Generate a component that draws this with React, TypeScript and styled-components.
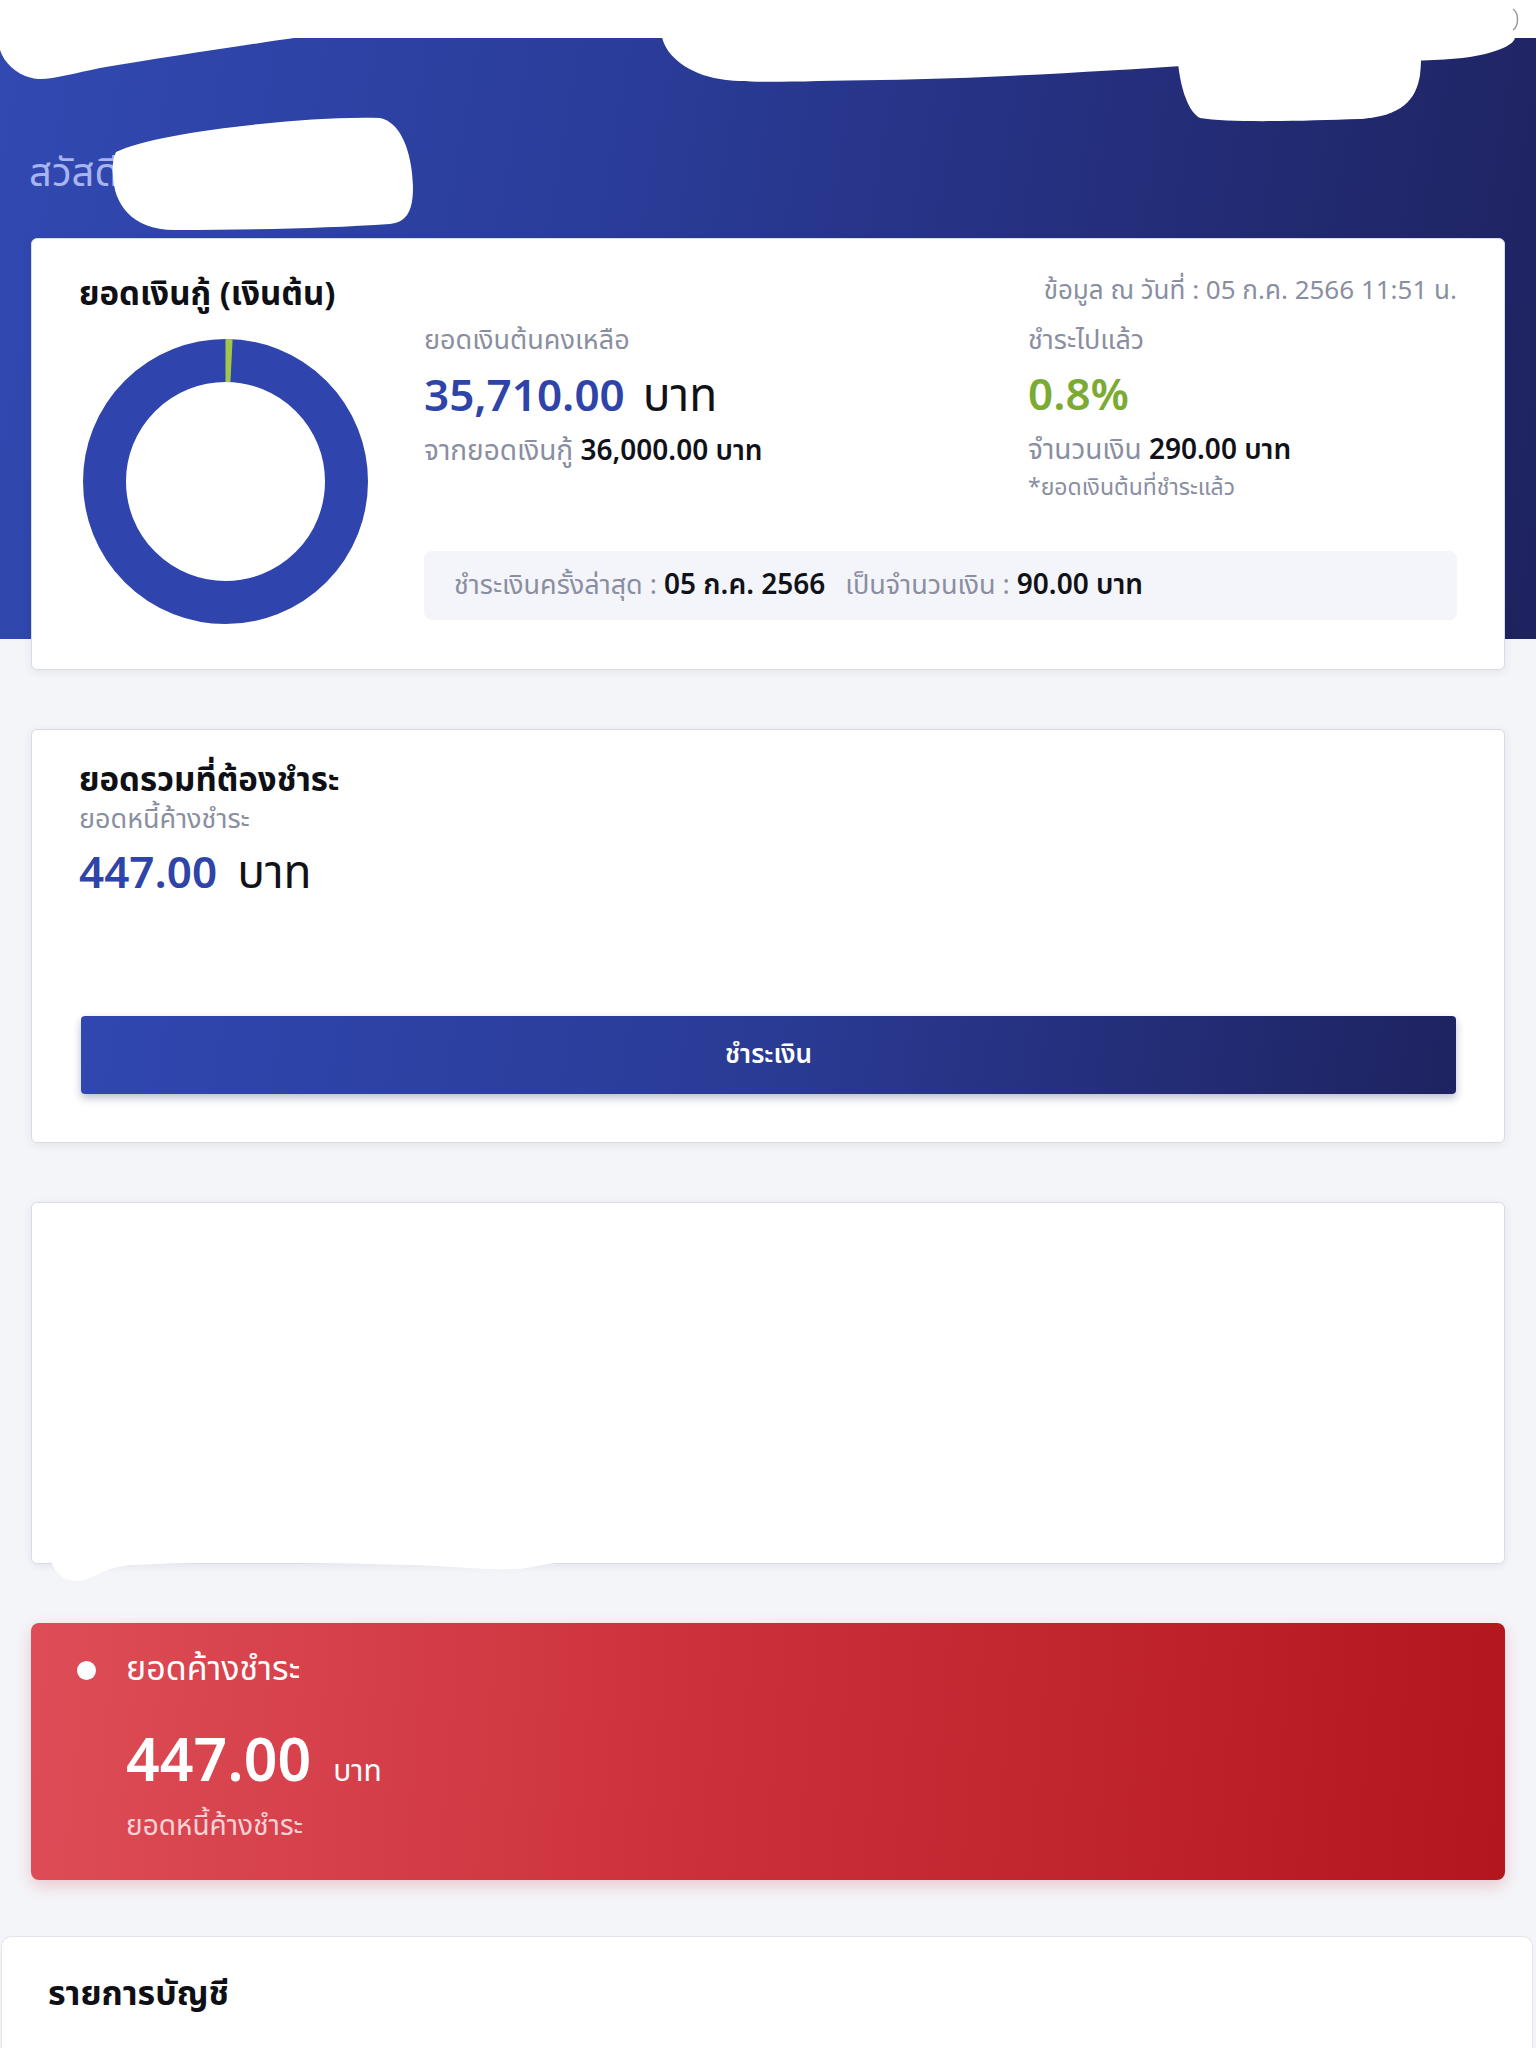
import React from 'react';
import styled, { createGlobalStyle } from 'styled-components';

const GlobalStyle = createGlobalStyle`
  * {
    box-sizing: border-box;
  }

  body {
    margin: 0;
    background: #f4f5f9;
    font-family: "Noto Sans Thai", "Noto Sans", "Open Sans", sans-serif;
    color: #111218;
  }
`;

const DONUT_SIZE = 285;
const DONUT_R = 121;
const DONUT_STROKE = 43;
const paidPercent = 0.8;

export default function App() {
  const circumference = 2 * Math.PI * DONUT_R;
  const paidLength = (circumference * paidPercent) / 100;

  return (
    <Page>
      <GlobalStyle />
      <TopBar />

      <Body>
        <Greeting>สวัสดี</Greeting>

        <Stack>
          <Card>
            <CardHeader>
              <CardTitle>ยอดเงินกู้ (เงินต้น)</CardTitle>
              <UpdatedAt>ข้อมูล ณ วันที่ : 05 ก.ค. 2566 11:51 น.</UpdatedAt>
            </CardHeader>

            <LoanBody>
              <Donut
                width={DONUT_SIZE}
                height={DONUT_SIZE}
                viewBox={`0 0 ${DONUT_SIZE} ${DONUT_SIZE}`}
              >
                <circle
                  cx={DONUT_SIZE / 2}
                  cy={DONUT_SIZE / 2}
                  r={DONUT_R}
                  fill="none"
                  stroke="#2f45ad"
                  strokeWidth={DONUT_STROKE}
                />
                <circle
                  cx={DONUT_SIZE / 2}
                  cy={DONUT_SIZE / 2}
                  r={DONUT_R}
                  fill="none"
                  stroke="#a2c64a"
                  strokeWidth={DONUT_STROKE}
                  strokeDasharray={`${paidLength} ${circumference}`}
                  transform={`rotate(-90 ${DONUT_SIZE / 2} ${DONUT_SIZE / 2})`}
                />
              </Donut>

              <Details>
                <StatGrid>
                  <StatColumn>
                    <Label>ยอดเงินต้นคงเหลือ</Label>
                    <BigAmount>
                      <Value $color="#2e44a8">35,710.00</Value>
                      <Unit>บาท</Unit>
                    </BigAmount>
                    <SubLine>
                      จากยอดเงินกู้ <strong>36,000.00 บาท</strong>
                    </SubLine>
                  </StatColumn>

                  <StatColumn>
                    <Label>ชำระไปแล้ว</Label>
                    <BigAmount>
                      <Value $color="#7cab33">0.8%</Value>
                    </BigAmount>
                    <SubLine>
                      จำนวนเงิน <strong>290.00 บาท</strong>
                    </SubLine>
                    <Note>*ยอดเงินต้นที่ชำระแล้ว</Note>
                  </StatColumn>
                </StatGrid>

                <LastPayment>
                  <span>ชำระเงินครั้งล่าสุด : </span>
                  <strong>05 ก.ค. 2566</strong>
                  <Spacer />
                  <span>เป็นจำนวนเงิน : </span>
                  <strong>90.00 บาท</strong>
                </LastPayment>
              </Details>
            </LoanBody>
          </Card>

          <Card>
            <DueBody>
              <CardTitle>ยอดรวมที่ต้องชำระ</CardTitle>
              <DueLabel>ยอดหนี้ค้างชำระ</DueLabel>
              <DueAmount>
                <Value $color="#2e44a8">447.00</Value>
                <Unit>บาท</Unit>
              </DueAmount>
              <PayButton type="button">ชำระเงิน</PayButton>
            </DueBody>
          </Card>

          <BlankCard>
            <BlankSmudge viewBox="0 0 560 30" width="560" height="30">
              <path
                d="M18 0 C22 12 30 22 45 22 C60 22 70 8 100 6 C180 2 300 4 380 6 C430 7 470 14 500 8 C520 4 540 2 547 0 Z"
                fill="#ffffff"
              />
            </BlankSmudge>
          </BlankCard>

          <OverdueCard>
            <OverdueHeader>
              <Dot />
              <span>ยอดค้างชำระ</span>
            </OverdueHeader>
            <OverdueAmount>
              <strong>447.00</strong>
              <small>บาท</small>
            </OverdueAmount>
            <OverdueNote>ยอดหนี้ค้างชำระ</OverdueNote>
          </OverdueCard>
        </Stack>

        <AccountsPanel>
          <PanelTitle>รายการบัญชี</PanelTitle>
        </AccountsPanel>
      </Body>

      {/* redaction marks painted over the header in the screenshot */}
      <Redaction viewBox="0 0 1536 240" width="1536" height="240">
        <g fill="#ffffff">
          <path d="M0 37 H300 C240 46 160 58 100 68 C70 74 45 82 32 78 C15 74 4 62 0 50 Z" />
          <path d="M662 37 C666 56 688 74 720 79 C748 84 800 81 880 80 C1000 78 1100 71 1200 65 C1300 60 1420 64 1470 57 C1500 52 1515 44 1515 37 Z" />
          <path d="M1177 37 C1176 70 1184 110 1200 118 C1230 123 1300 121 1360 119 C1402 116 1416 100 1420 75 C1422 56 1421 45 1420 37 Z" />
          <path d="M116 152 C140 140 200 130 260 124 C300 120 340 117 380 118 C400 122 412 150 413 187 C413 214 405 222 390 224 C330 228 260 230 175 230 C130 230 114 202 113 176 C112 166 113 158 116 152 Z" />
        </g>
        <path d="M1513 9 C1519 13 1519 26 1513 30" fill="none" stroke="#9a9a9a" strokeWidth="1.5" />
      </Redaction>
    </Page>
  );
}

const Page = styled.div`
  position: relative;
  width: 1536px;
  min-height: 2048px;
  overflow: hidden;
`;

const TopBar = styled.div`
  height: 38px;
  background: #ffffff;
`;

const Body = styled.main`
  background: linear-gradient(100deg, #3149b2 0%, #2a3c98 40%, #232c76 75%, #1e235f 100%)
      top left / 100% 601px no-repeat,
    #f4f5f9;
  padding-top: 109px;
`;

const Greeting = styled.h1`
  margin: 0 0 37px;
  padding-left: 29px;
  font-size: 40px;
  line-height: 54px;
  font-weight: 400;
  color: #a8b4ef;
`;

const Stack = styled.div`
  display: flex;
  flex-direction: column;
  gap: 59px;
  padding: 0 31px;
`;

const Card = styled.section`
  background: #ffffff;
  border: 1px solid #d9dce5;
  border-radius: 6px;
  box-shadow: 0 2px 8px rgba(30, 40, 90, 0.08);
`;

const CardHeader = styled.div`
  display: flex;
  justify-content: space-between;
  align-items: center;
  padding: 36px 47px 0 47px;
`;

const CardTitle = styled.h2`
  margin: 0;
  font-size: 33px;
  line-height: 40px;
  font-weight: 700;
  color: #0f1016;
`;

const PanelTitle = styled(CardTitle)`
  font-size: 34px;
`;

const UpdatedAt = styled.div`
  font-size: 26px;
  line-height: 34px;
  color: #8a8ea1;
  margin-top: -8px;
`;

const LoanBody = styled.div`
  display: flex;
  align-items: flex-start;
  gap: 56px;
  padding: 8px 47px 45px 51px;
`;

const Donut = styled.svg`
  flex: none;
  margin-top: 16px;
`;

const Details = styled.div`
  flex: 1;
  display: flex;
  flex-direction: column;
`;

const StatGrid = styled.div`
  display: grid;
  grid-template-columns: 604px 1fr;
`;

const StatColumn = styled.div`
  display: flex;
  flex-direction: column;
`;

const Label = styled.div`
  font-size: 27px;
  line-height: 36px;
  color: #8a8ea1;
`;

const BigAmount = styled.div`
  display: flex;
  align-items: baseline;
  gap: 18px;
  margin-top: 10px;
  line-height: 56px;
`;

const DueAmount = styled(BigAmount)`
  margin-top: 7px;
  gap: 20px;
`;

const Value = styled.span<{ $color: string }>`
  font-size: 44px;
  font-weight: 600;
  color: ${(p) => p.$color};
`;

const Unit = styled.span`
  font-size: 46px;
  font-weight: 400;
  color: #111218;
`;

const SubLine = styled.div`
  margin-top: 8px;
  font-size: 28px;
  line-height: 36px;
  color: #8a8ea1;

  strong {
    color: #111218;
    font-weight: 600;
  }
`;

const Note = styled.div`
  margin-top: 4px;
  font-size: 23px;
  line-height: 30px;
  color: #8a8ea1;
`;

const LastPayment = styled.div`
  display: flex;
  align-items: center;
  height: 69px;
  margin-top: 48px;
  padding: 0 30px;
  border-radius: 8px;
  background: #f4f5fa;
  font-size: 27px;
  color: #8a8ea1;
  white-space: pre;

  strong {
    color: #111218;
    font-size: 28px;
    font-weight: 600;
  }
`;

const Spacer = styled.span`
  width: 20px;
`;

const DueBody = styled.div`
  display: flex;
  flex-direction: column;
  padding: 31px 48px 48px 47px;
`;

const DueLabel = styled.div`
  font-size: 27px;
  line-height: 38px;
  color: #8a8ea1;
`;

const PayButton = styled.button`
  margin-top: 113px;
  margin-left: 2px;
  height: 78px;
  border: none;
  border-radius: 4px;
  background: linear-gradient(100deg, #3047b1 0%, #2a3b95 50%, #1e2360 100%);
  box-shadow: 0 4px 8px rgba(30, 36, 96, 0.3);
  color: #ffffff;
  font-family: inherit;
  font-size: 26px;
  font-weight: 600;
  cursor: pointer;
`;

const BlankCard = styled(Card)`
  position: relative;
  height: 362px;
`;

const BlankSmudge = styled.svg`
  position: absolute;
  left: 0;
  top: 100%;
  margin-top: -4px;
`;

const OverdueCard = styled.section`
  padding: 27px 46px 33px;
  border-radius: 8px;
  background: linear-gradient(95deg, #de4d57 0%, #cc313b 45%, #b3161d 100%);
  box-shadow: 0 6px 16px rgba(200, 40, 50, 0.22);
  color: #ffffff;
`;

const OverdueHeader = styled.div`
  display: flex;
  align-items: center;
  gap: 30px;
  font-size: 34px;
  line-height: 40px;
`;

const Dot = styled.span`
  width: 19px;
  height: 19px;
  border-radius: 50%;
  background: #ffffff;
`;

const OverdueAmount = styled.div`
  display: flex;
  align-items: baseline;
  gap: 22px;
  margin-top: 38px;
  padding-left: 49px;
  line-height: 70px;

  strong {
    font-size: 59px;
    font-weight: 600;
  }

  small {
    font-size: 30px;
  }
`;

const OverdueNote = styled.div`
  padding-left: 49px;
  font-size: 28px;
  line-height: 40px;
  color: #fad2d5;
`;

const AccountsPanel = styled.section`
  margin: 56px 3px 0 1px;
  height: 200px;
  padding: 38px 46px;
  background: #ffffff;
  border: 1px solid #e2e4ec;
  border-bottom: none;
  border-radius: 10px 10px 0 0;
`;

const Redaction = styled.svg`
  position: absolute;
  top: 0;
  left: 0;
  pointer-events: none;
`;
